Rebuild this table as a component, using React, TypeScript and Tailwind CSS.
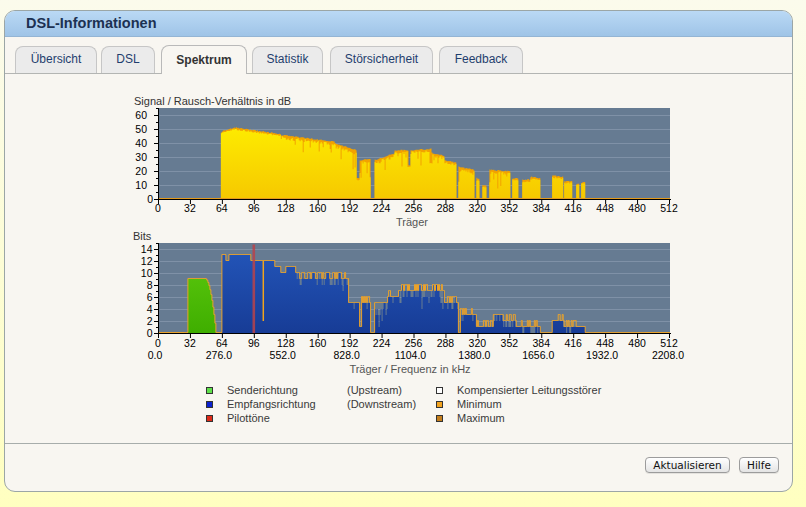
import React from 'react';

type Seg = [number, number, number, number, number];

// plot geometry inside each chart svg (svg left edge sits at page x 120)
const PX = 39;
const PW = 511;
const cx = (c: number) => PX + (c * PW) / 512;
const FONT = "'Liberation Sans', Arial, sans-serif";

function rnd(i: number) {
  const x = Math.sin(i * 127.1 + 311.7) * 43758.5453;
  return x - Math.floor(x);
}

function levelAt(segs: Seg[], c: number): [number, number] {
  for (const s of segs) {
    if (c >= s[0] && c < s[1]) {
      const t = (c - s[0]) / Math.max(1, s[1] - s[0]);
      return [s[2] + (s[3] - s[2]) * t, s[4]];
    }
  }
  return [0, 0];
}

function stepArea(vals: number[], y: (v: number) => number, base: number) {
  let d = `M${cx(0)} ${base}`;
  vals.forEach((v, c) => {
    const yy = y(v).toFixed(1);
    d += `L${cx(c).toFixed(1)} ${yy}L${cx(c + 1).toFixed(1)} ${yy}`;
  });
  return d + `L${cx(512)} ${base}Z`;
}

function stepLine(vals: number[], y: (v: number) => number) {
  let d = '';
  vals.forEach((v, c) => {
    const yy = (y(v) - 0.5).toFixed(1);
    d += `${c === 0 ? 'M' : 'L'}${cx(c).toFixed(1)} ${yy}L${cx(c + 1).toFixed(1)} ${yy}`;
  });
  return d;
}

const carriers = Array.from({ length: 512 }, (_, c) => c);

const snrSegs: Seg[] = [
  [62, 64, 47, 48, 0],
  [64, 78, 48, 50.5, 0.5],
  [78, 122, 50, 45.5, 1],
  [122, 176, 45, 40, 2.5],
  [176, 198, 39, 34, 3],
  [198, 201, 14, 14, 1],
  [201, 212, 27, 28, 2],
  [216, 236, 27, 32, 3],
  [236, 250, 34, 34, 2],
  [250, 252, 23, 23, 0],
  [252, 273, 34, 35, 2],
  [273, 286, 32, 30, 2],
  [286, 298, 27, 25, 2],
  [300, 316, 22, 20, 3],
  [318, 321, 14, 14, 1],
  [324, 328, 9, 9, 1],
  [331, 352, 20, 19, 2],
  [354, 360, 14, 14, 1],
  [364, 372, 13, 13, 1],
  [372, 382, 15, 14, 1],
  [394, 405, 16, 15, 1],
  [406, 414, 12, 12, 1],
  [418, 421, 10, 10, 0],
  [423, 427, 11, 11, 0],
];

const dsSegs: Seg[] = [
  [63, 67, 13, 13, 0],
  [67, 70, 12, 12, 0],
  [70, 92, 13, 13, 0],
  [92, 116, 12, 12, 0],
  [116, 122, 11, 11, 0],
  [122, 127, 10, 10, 0],
  [127, 137, 11, 11, 0],
  [137, 190, 9.5, 9, 3],
  [190, 201, 5, 5, 1],
  [201, 203, 1, 1, 0],
  [203, 212, 5, 5, 1],
  [216, 229, 4.5, 4.5, 2.5],
  [229, 240, 6, 6, 1],
  [240, 286, 7, 7, 3],
  [286, 300, 5, 5, 2],
  [302, 318, 3.5, 3, 2],
  [318, 335, 1, 1, 1],
  [335, 345, 2.6, 2.6, 1],
  [345, 358, 1.7, 1.7, 1],
  [358, 382, 1, 1, 1.5],
  [394, 405, 2, 2, 1],
  [405, 415, 1, 1, 1],
  [415, 427, 1, 1, 1],
];

const snrCur = carriers.map((c) => {
  const [L, n] = levelAt(snrSegs, c);
  if (L <= 0) return 0;
  const dip = n >= 2 && rnd(c + 500) > 0.85 ? rnd(c + 900) * 12 : 0;
  return Math.max(0, L - rnd(c) * n - dip);
});
const snrMax = carriers.map((c) => {
  const [L] = levelAt(snrSegs, c);
  return L > 0 ? L + 0.4 + rnd(c + 1300) * 0.8 : 0;
});

const dsCur = carriers.map((c) => {
  const [L, n] = levelAt(dsSegs, c);
  if (L <= 0) return 0;
  let v = L + (rnd(c + 40) - 0.6) * n;
  if (n >= 2 && rnd(c + 300) > 0.94) v -= rnd(c + 600) * 3;
  return Math.max(0, Math.round(v));
});
const dsMax = carriers.map((c, i) => {
  const [L, n] = levelAt(dsSegs, c);
  if (L <= 0) return 0;
  return Math.max(dsCur[i], Math.round(L + (n > 0 && rnd(c + 70) > 0.7 ? 0.8 : 0)));
});
const usCur = carriers.map((c) =>
  c < 29 || c >= 57 ? 0 : c < 46 ? 9 : Math.max(0, 9 * (1 - ((c - 46) / 11) ** 2)),
);
const bitsMax = carriers.map((c, i) => (c < 63 ? usCur[i] : dsMax[i]));

const xTicks = Array.from({ length: 17 }, (_, i) => i * 32);

function SnrChart() {
  const top = 13;
  const bot = 104;
  const y = (v: number) => bot - v * 1.4;
  return (
    <svg width={570} height={135} className="block" fontFamily={FONT}>
      <defs>
        <linearGradient id="snrFill" x1="0" y1={top} x2="0" y2={bot} gradientUnits="userSpaceOnUse">
          <stop offset="0" stopColor="#fff500" />
          <stop offset="1" stopColor="#f6c800" />
        </linearGradient>
      </defs>
      <text x={14} y={9.5} fontSize={11} fill="#333">Signal / Rausch-Verhältnis in dB</text>
      <rect x={PX} y={top} width={PW} height={bot - top} fill="#667b92" />
      {[10, 20, 30, 40, 50, 60].map((v) => (
        <line key={v} x1={PX} x2={PX + PW} y1={y(v) + 0.5} y2={y(v) + 0.5} stroke="#7f91a7" />
      ))}
      <path d={stepArea(snrMax, y, bot)} fill="#f2a200" />
      <path d={stepArea(snrCur, y, bot)} fill="url(#snrFill)" />
      <line x1={PX} x2={PX + PW} y1={bot - 0.5} y2={bot - 0.5} stroke="#e39a1c" />
      <line x1={PX - 0.5} x2={PX - 0.5} y1={top} y2={bot + 1} stroke="#000" />
      <line x1={PX - 1} x2={PX + PW + 1} y1={bot + 0.5} y2={bot + 0.5} stroke="#000" />
      {[0, 10, 20, 30, 40, 50, 60].map((v) => (
        <g key={v}>
          <line x1={PX - 5} x2={PX} y1={y(v) + 0.5} y2={y(v) + 0.5} stroke="#000" />
          <line x1={PX - 3} x2={PX} y1={y(v + 5) + 0.5} y2={y(v + 5) + 0.5} stroke="#000" />
          <text x={v === 0 ? 33 : 27} y={y(v) + 4} fontSize={10.5} textAnchor="end" fill="#000">
            {v}
          </text>
        </g>
      ))}
      {xTicks.map((c) => (
        <g key={c}>
          <line x1={cx(c) - 0.5} x2={cx(c) - 0.5} y1={bot} y2={bot + 5} stroke="#000" />
          <text x={cx(c) - 1} y={117} fontSize={10.5} textAnchor="middle" fill="#000">
            {c}
          </text>
        </g>
      ))}
      <text x={292} y={130.5} fontSize={11} textAnchor="middle" fill="#555">Träger</text>
    </svg>
  );
}

function BitsChart() {
  const top = 13;
  const bot = 103;
  const y = (v: number) => bot - v * 6;
  return (
    <svg width={570} height={146} className="block" fontFamily={FONT}>
      <defs>
        <linearGradient id="dsFill" x1="0" y1={top} x2="0" y2={bot} gradientUnits="userSpaceOnUse">
          <stop offset="0" stopColor="#2457bb" />
          <stop offset="1" stopColor="#173c96" />
        </linearGradient>
        <linearGradient id="usFill" x1="0" y1={top} x2="0" y2={bot} gradientUnits="userSpaceOnUse">
          <stop offset="0" stopColor="#60cc10" />
          <stop offset="1" stopColor="#3fae00" />
        </linearGradient>
      </defs>
      <text x={13} y={10} fontSize={11} fill="#333">Bits</text>
      <rect x={PX} y={top} width={PW} height={bot - top} fill="#667b92" />
      {[2, 4, 6, 8, 10, 12, 14].map((v) => (
        <line key={v} x1={PX} x2={PX + PW} y1={y(v) + 0.5} y2={y(v) + 0.5} stroke="#7f91a7" />
      ))}
      <path d={stepArea(usCur, y, bot)} fill="url(#usFill)" />
      <path d={stepArea(dsCur, y, bot)} fill="url(#dsFill)" />
      <path d={stepLine(bitsMax, y)} fill="none" stroke="#e9a22c" strokeWidth={1} />
      <line x1={cx(104) + 0.5} x2={cx(104) + 0.5} y1={y(12)} y2={y(2)} stroke="#f0a41c" strokeWidth={1.5} />
      <rect x={132.5} y={14.5} width={2.6} height={bot - 14.5} fill="#b8434a" opacity={0.85} />
      <line x1={PX - 0.5} x2={PX - 0.5} y1={top} y2={bot + 1} stroke="#000" />
      <line x1={PX - 1} x2={PX + PW + 1} y1={bot + 0.5} y2={bot + 0.5} stroke="#000" />
      {[0, 2, 4, 6, 8, 10, 12, 14].map((v) => (
        <g key={v}>
          <line x1={PX - 5} x2={PX} y1={y(v) + 0.5} y2={y(v) + 0.5} stroke="#000" />
          <line x1={PX - 3} x2={PX} y1={y(v + 1) + 0.5} y2={y(v + 1) + 0.5} stroke="#000" />
          <text x={32.5} y={y(v) + 4} fontSize={10.5} textAnchor="end" fill="#000">
            {v}
          </text>
        </g>
      ))}
      {xTicks.map((c) => (
        <g key={c}>
          <line x1={cx(c) - 0.5} x2={cx(c) - 0.5} y1={bot} y2={bot + 5} stroke="#000" />
          <text x={cx(c) - 1} y={116.5} fontSize={10.5} textAnchor="middle" fill="#000">
            {c}
          </text>
          {c % 64 === 0 && (
            <text x={c === 512 ? cx(c) - 2 : cx(c) - 4} y={128.5} fontSize={10.5} textAnchor="middle" fill="#000">
              {((c / 32) * 138).toFixed(1)}
            </text>
          )}
        </g>
      ))}
      <text x={290} y={142.5} fontSize={11} textAnchor="middle" fill="#555">Träger / Frequenz in kHz</text>
    </svg>
  );
}

const tabs = [
  { label: 'Übersicht', cls: 'w-[82px]' },
  { label: 'DSL', cls: 'w-[54px] ml-[4px]' },
  { label: 'Spektrum', cls: 'w-[86px] ml-[6px]', active: true },
  { label: 'Statistik', cls: 'w-[71px] ml-[5px]' },
  { label: 'Störsicherheit', cls: 'w-[103px] ml-[7px]' },
  { label: 'Feedback', cls: 'w-[84px] ml-[6px]' },
];

const legend = [
  { a: 'bg-[#5ee04a]', at: 'Senderichtung', dir: '(Upstream)', b: 'bg-white', bt: 'Kompensierter Leitungsstörer' },
  { a: 'bg-[#0b21cf]', at: 'Empfangsrichtung', dir: '(Downstream)', b: 'bg-[#f2a31f]', bt: 'Minimum' },
  { a: 'bg-[#dd2a18]', at: 'Pilottöne', dir: '', b: 'bg-[#c47e1c]', bt: 'Maximum' },
];

export default function App() {
  return (
    <div className="w-[806px] h-[507px] overflow-hidden bg-gradient-to-b from-[#fbfbec] to-[#ffffc0] pt-[10px] pl-[4px] font-['Liberation_Sans',Arial,sans-serif]">
      <div className="w-[789px] h-[482px] rounded-[11px] border border-[#9ba6a6] bg-[#f8f6f1] overflow-hidden flex flex-col">
        <div className="h-[26px] shrink-0 bg-gradient-to-b from-[#bad9f5] to-[#9fc4e7] border-b border-[#94b5d4] pl-[21px] flex items-center">
          <h1 className="text-[14.5px] font-bold text-[#1c3152] leading-none">DSL-Informationen</h1>
        </div>

        <div className="h-[37px] shrink-0 flex items-end pl-[10px] border-b border-[#b3b5b3]">
          {tabs.map((t) =>
            t.active ? (
              <div
                key={t.label}
                className={`${t.cls} h-[29px] -mb-px rounded-t-[8px] border border-b-0 border-[#b9b9b9] bg-[#f8f6f1] flex items-center justify-center pb-[1px] text-[12px] font-bold text-[#333]`}
              >
                {t.label}
              </div>
            ) : (
              <div
                key={t.label}
                className={`${t.cls} h-[27px] rounded-t-[8px] border border-b-0 border-[#c6c6c6] bg-[#ebebeb] flex items-center justify-center pb-[2px] text-[12px] text-[#1f3e6e]`}
              >
                {t.label}
              </div>
            ),
          )}
        </div>

        <div className="h-[369px] shrink-0 pt-[21px] pl-[115px]">
          <SnrChart />
          <BitsChart />
          <div className="mt-[7px] ml-[86px] text-[11px] text-[#3a3a3a]">
            {legend.map((r) => (
              <div key={r.at} className="flex items-center h-[14px] leading-[14px]">
                <span className={`w-[7px] h-[7px] border border-[#333] ${r.a}`} />
                <span className="ml-[14px] w-[120px]">{r.at}</span>
                <span className="w-[89px]">{r.dir}</span>
                <span className={`w-[7px] h-[7px] border border-[#333] ${r.b}`} />
                <span className="ml-[14px]">{r.bt}</span>
              </div>
            ))}
          </div>
        </div>

        <div className="flex-1 border-t border-[#a7adab] flex justify-end items-start gap-[9px] pt-[13px] pr-[13px] font-['DejaVu_Sans',sans-serif] text-[10.5px] text-[#111]">
          <button className="w-[85px] h-[16px] leading-none rounded-[4px] border border-[#9c9c9c] bg-gradient-to-b from-white to-[#e4e4e4] shadow-[0_1px_0_rgba(0,0,0,0.08)]">
            Aktualisieren
          </button>
          <button className="w-[40px] h-[16px] leading-none rounded-[4px] border border-[#9c9c9c] bg-gradient-to-b from-white to-[#e4e4e4] shadow-[0_1px_0_rgba(0,0,0,0.08)]">
            Hilfe
          </button>
        </div>
      </div>
    </div>
  );
}
